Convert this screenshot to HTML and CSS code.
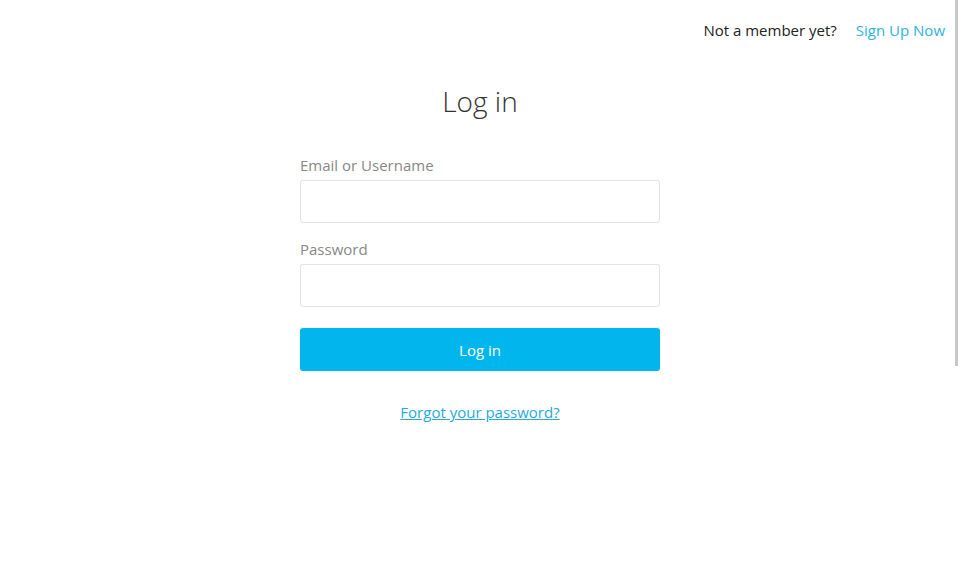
FILE: index.html
```html
<!DOCTYPE html>
<html>
<head>
<meta charset="utf-8">
<link rel="stylesheet" href="styles.css">
</head>
<body>
<header class="topbar">
  <span class="prompt">Not a member yet?</span>
  <a class="signup" href="#">Sign Up Now</a>
</header>
<main class="login">
  <h1 class="title">Log in</h1>
  <form class="form">
    <label class="label" for="user">Email or Username</label>
    <input class="input" id="user" type="text">
    <label class="label" for="pass">Password</label>
    <input class="input last" id="pass" type="password">
    <button class="btn" type="button">Log in</button>
  </form>
  <a class="forgot" href="#">Forgot your password?</a>
</main>
<div class="scrollbar"></div>
</body>
</html>
```
FILE: styles.css
```css
html, body {
  margin: 0;
  padding: 0;
  background: #fff;
  font-family: "Open Sans", "Noto Sans", sans-serif;
}
.topbar {
  display: flex;
  justify-content: flex-end;
  align-items: center;
  gap: 19px;
  padding: 19px 15px 0 0;
  font-size: 15px;
  line-height: 22px;
}
.prompt { color: #222; }
.signup { color: #2db4e2; text-decoration: none; }
.login {
  width: 360px;
  margin: 0 auto;
  display: flex;
  flex-direction: column;
  align-items: stretch;
}
.title {
  margin: 40px 0 0;
  text-align: center;
  font-weight: 300;
  font-size: 28px;
  line-height: 40px;
  color: #333;
}
.form {
  display: flex;
  flex-direction: column;
  margin-top: 33px;
}
.label {
  font-size: 15px;
  line-height: 22px;
  color: #888;
  margin-bottom: 4px;
}
.input {
  box-sizing: border-box;
  height: 43px;
  border: 1px solid #e2e2e2;
  border-radius: 3px;
  margin: 0 0 15px;
  font: inherit;
  padding: 0 10px;
}
.input.last { margin-bottom: 21px; }
.btn {
  height: 43px;
  border: 0;
  border-radius: 3px;
  background: #00b6ed;
  color: #fff;
  font: inherit;
  font-size: 15px;
  padding: 0;
}
.forgot {
  align-self: center;
  margin-top: 30px;
  font-size: 15px;
  line-height: 22px;
  color: #27a9db;
  text-decoration: underline;
}
.scrollbar {
  position: absolute;
  top: 0;
  right: 2px;
  width: 3px;
  height: 366px;
  background: #c8c8c8;
}
```
